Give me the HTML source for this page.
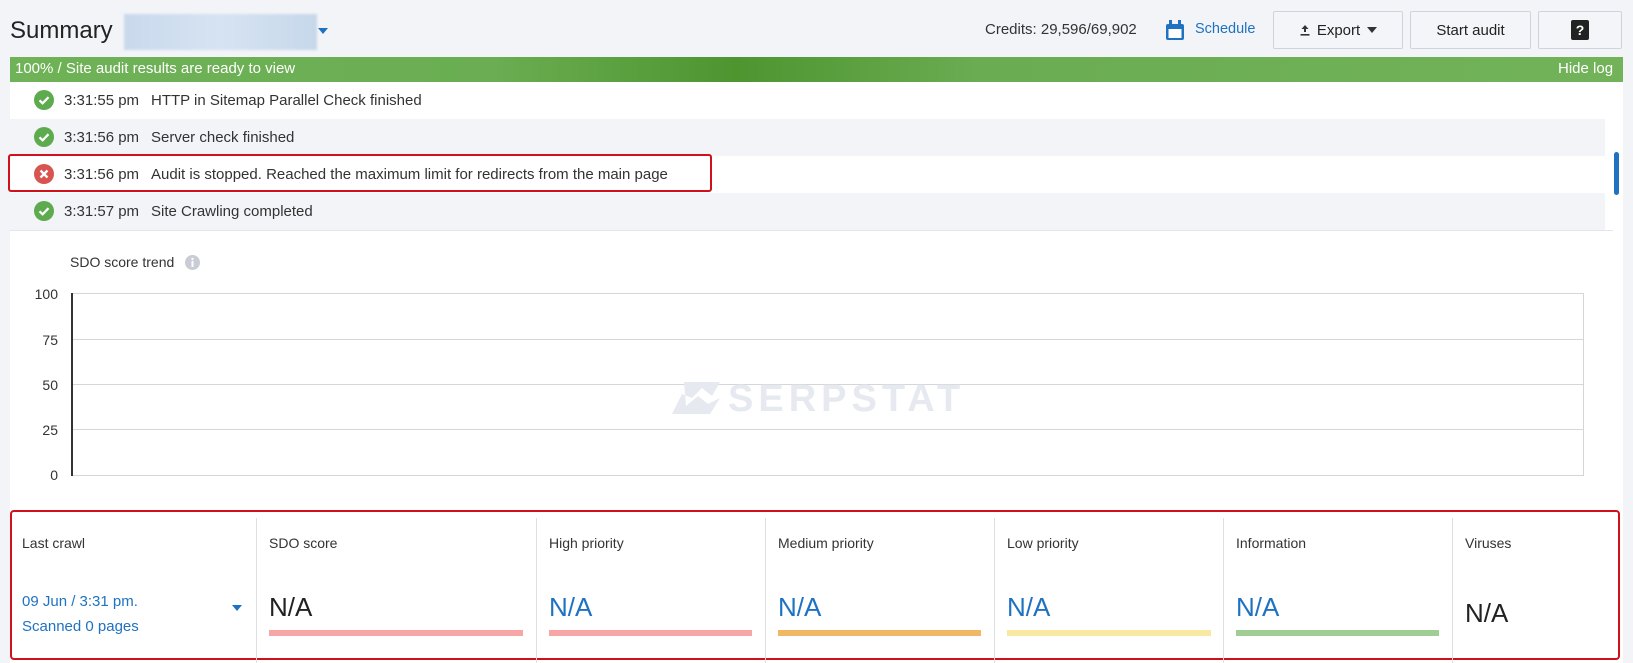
<!DOCTYPE html>
<html><head><meta charset="utf-8"><style>
*{margin:0;padding:0;box-sizing:border-box}
body{width:1633px;height:663px;overflow:hidden;background:#f2f4f8;font-family:"Liberation Sans",sans-serif;color:#222;position:relative}
.a{position:absolute}
.btn{position:absolute;top:11px;height:38px;border:1px solid #cfd3db;border-radius:2px;background:#f4f5f8;font-size:15px;color:#222;display:flex;align-items:center;justify-content:center}
.row{position:absolute;left:10px;width:1603px;height:37px;font-size:15px;color:#333}
.row .ic{position:absolute;left:24px;top:8px}
.row .t{position:absolute;left:54px;top:10px}
.row .m{position:absolute;left:141px;top:10px}
.yl{position:absolute;width:40px;text-align:right;left:18px;font-size:14px;color:#333}
.gl{position:absolute;left:72px;width:1512px;height:1px;background:#d4d6da}
.col{position:absolute;top:518px;height:145px;border-left:1px solid #dcdfe4}
.lab{position:absolute;top:17px;left:12px;font-size:14px;color:#333}
.na{position:absolute;top:74px;left:12px;font-size:26px;color:#1f72c2}
.bar{position:absolute;top:112px;left:12px;height:6px}
</style></head><body>
<div class="a" style="left:10px;top:58px;width:1613px;height:605px;background:#fff"></div>
<div class="a" style="left:10px;top:17px;font-size:24px;color:#222">Summary</div>
<div class="a" style="left:124px;top:14px;width:193px;height:36px;background:linear-gradient(90deg,#c9d9ec,#d6e3f2,#c7d8eb);filter:blur(1px)"></div>
<svg class="a" style="left:318px;top:28px" width="10" height="7"><path d="M0 0H10L5 6Z" fill="#1f72c2"/></svg>
<div class="a" style="left:985px;top:21px;font-size:15px;color:#333">Credits: 29,596/69,902</div>
<svg class="a" style="left:1165px;top:20px" width="20" height="21" viewBox="0 0 20 21"><rect x="1" y="4" width="18" height="16" rx="2" fill="#1f72c2"/><rect x="3.5" y="9" width="13" height="9" fill="#fff"/><rect x="4" y="0" width="3" height="6" fill="#1f72c2"/><rect x="13" y="0" width="3" height="6" fill="#1f72c2"/></svg>
<div class="a" style="left:1195px;top:21px;font-size:14.5px;color:#1f72c2">Schedule</div>
<div class="btn" style="left:1273px;width:130px">
<svg width="12" height="12" viewBox="0 0 12 12" style="margin-right:6px"><path d="M6 1L2.5 5H5V8H7V5H9.5Z" fill="#333"/><rect x="1.5" y="10" width="9" height="1.6" fill="#333"/></svg>Export
<svg width="10" height="6" style="margin-left:7px"><path d="M0 0H10L5 6Z" fill="#333"/></svg></div>
<div class="btn" style="left:1410px;width:121px">Start audit</div>
<div class="btn" style="left:1538px;width:84px"><div style="width:18px;height:20px;background:#222;border-radius:2px;color:#fff;font-weight:bold;font-size:14px;text-align:center;line-height:20px">?</div></div>
<div class="a" style="left:10px;top:57px;width:1613px;height:25px;background:linear-gradient(90deg,#6fb257 0%,#6aad52 30%,#4e9530 45%,#6aac52 60%,#72b35a 100%)"></div>
<div class="a" style="left:15px;top:60px;font-size:15px;color:#fff">100% / Site audit results are ready to view</div>
<div class="a" style="left:1558px;top:60px;font-size:15px;color:#fff">Hide log</div>
<div class="row" style="top:82px;background:#fff"><svg class="ic" width="20" height="20"><circle cx="10" cy="10" r="10" fill="#5daa4f"/><path d="M5.5 10.3L8.6 13.3L14.5 7.2" stroke="#fff" stroke-width="2.2" fill="none"/></svg><span class="t">3:31:55 pm</span><span class="m">HTTP in Sitemap Parallel Check finished</span></div>
<div class="row" style="top:119px;background:#f2f4f8;width:1595px"><svg class="ic" width="20" height="20"><circle cx="10" cy="10" r="10" fill="#5daa4f"/><path d="M5.5 10.3L8.6 13.3L14.5 7.2" stroke="#fff" stroke-width="2.2" fill="none"/></svg><span class="t">3:31:56 pm</span><span class="m">Server check finished</span></div>
<div class="row" style="top:156px;background:#fff"><svg class="ic" width="20" height="20"><circle cx="10" cy="10" r="10" fill="#d9534f"/><path d="M6.5 6.5L13.5 13.5M13.5 6.5L6.5 13.5" stroke="#fff" stroke-width="2.4"/></svg><span class="t">3:31:56 pm</span><span class="m">Audit is stopped. Reached the maximum limit for redirects from the main page</span></div>
<div class="row" style="top:193px;background:#f2f4f8;width:1595px"><svg class="ic" width="20" height="20"><circle cx="10" cy="10" r="10" fill="#5daa4f"/><path d="M5.5 10.3L8.6 13.3L14.5 7.2" stroke="#fff" stroke-width="2.2" fill="none"/></svg><span class="t">3:31:57 pm</span><span class="m">Site Crawling completed</span></div>
<div class="a" style="left:8px;top:154px;width:704px;height:38px;border:2px solid #d0101b;border-radius:3px"></div>
<div class="a" style="left:1614px;top:152px;width:5px;height:43px;background:#1f72c2;border-radius:3px"></div>
<div class="a" style="left:10px;top:230px;width:1603px;height:1px;background:#e3e5ea"></div>
<div class="a" style="left:70px;top:254px;font-size:14px;color:#333">SDO score trend</div>
<svg class="a" style="left:185px;top:255px" width="15" height="15"><circle cx="7.5" cy="7.5" r="7.5" fill="#c8ccd4"/><rect x="6.5" y="6" width="2" height="6" fill="#fff"/><circle cx="7.5" cy="4" r="1.2" fill="#fff"/></svg>
<div class="gl" style="top:293px"></div><div class="gl" style="top:339px"></div><div class="gl" style="top:384px"></div><div class="gl" style="top:429px"></div><div class="gl" style="top:475px"></div>
<div class="a" style="left:1583px;top:293px;width:1px;height:183px;background:#d4d6da"></div>
<div class="a" style="left:71px;top:293px;width:2px;height:183px;background:#333"></div>
<div class="yl" style="top:286px">100</div><div class="yl" style="top:332px">75</div><div class="yl" style="top:377px">50</div><div class="yl" style="top:422px">25</div><div class="yl" style="top:467px">0</div>
<svg class="a" style="left:672px;top:382px" width="50" height="32"><path d="M12 0H48L40 14 30 6 20 16 10 12 0 32H38L48 16 36 22 26 14 14 24Z" fill="#e6e9f0"/></svg>
<div class="a" style="left:728px;top:378px;font-size:38px;font-weight:bold;color:#e6e9f0;letter-spacing:5px">SERPSTAT</div>
<div class="a" style="left:10px;top:510px;width:1610px;height:150px;border:2px solid #d0101b;border-radius:4px"></div>
<div class="col" style="left:10px;border-left:none;width:246px"><div class="lab">Last crawl</div>
<div class="a" style="left:12px;top:71px;font-size:15px;color:#1f72c2;line-height:25px">09 Jun / 3:31 pm.<br>Scanned 0 pages</div>
<svg class="a" style="left:222px;top:87px" width="10" height="7"><path d="M0 0H10L5 6Z" fill="#1f72c2"/></svg></div>
<div class="col" style="left:256px;width:280px"><div class="lab">SDO score</div><div class="na" style="color:#222">N/A</div><div class="bar" style="width:254px;background:#f8a5a5"></div></div>
<div class="col" style="left:536px;width:229px"><div class="lab">High priority</div><div class="na">N/A</div><div class="bar" style="width:203px;background:#f8a5a5"></div></div>
<div class="col" style="left:765px;width:229px"><div class="lab">Medium priority</div><div class="na">N/A</div><div class="bar" style="width:203px;background:#f0b865"></div></div>
<div class="col" style="left:994px;width:229px"><div class="lab">Low priority</div><div class="na">N/A</div><div class="bar" style="width:204px;background:#f9e8a2"></div></div>
<div class="col" style="left:1223px;width:229px"><div class="lab">Information</div><div class="na">N/A</div><div class="bar" style="width:203px;background:#9fcd94"></div></div>
<div class="col" style="left:1452px;width:166px"><div class="lab">Viruses</div><div class="na" style="color:#222;top:80px">N/A</div></div>
</body></html>
